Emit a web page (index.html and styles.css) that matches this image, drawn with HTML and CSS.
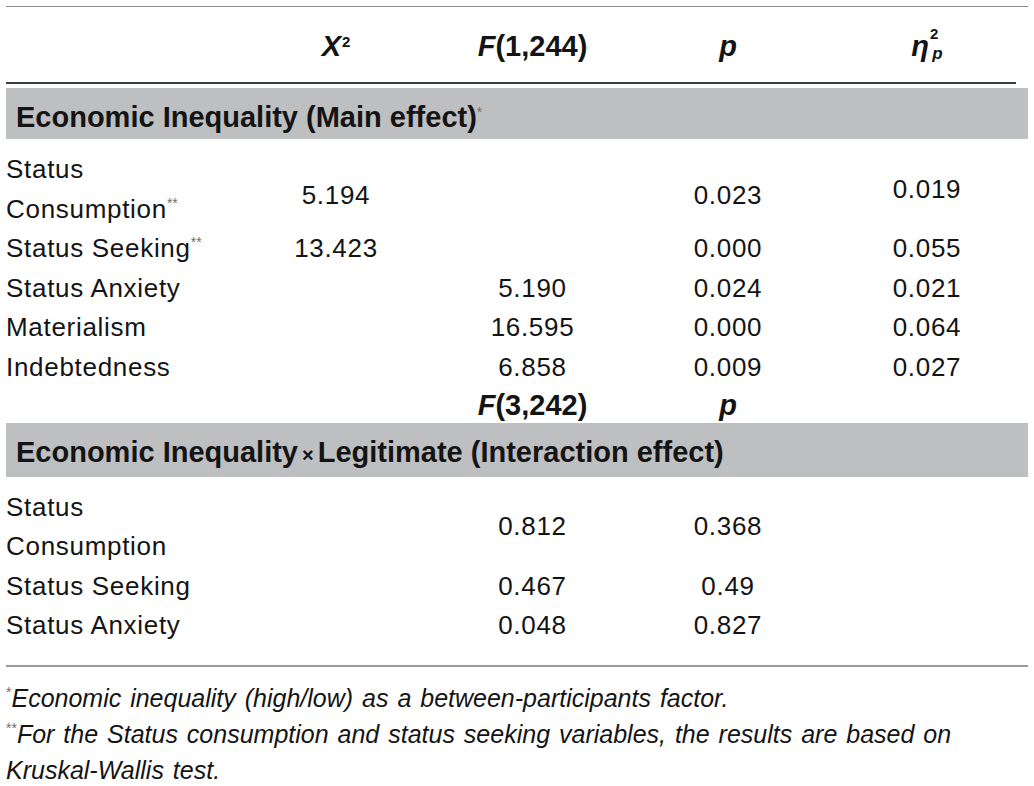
FILE: index.html
```html
<!DOCTYPE html>
<html lang="en">
<head>
  <meta charset="UTF-8" />
  <title>Economic inequality results</title>
  <link rel="stylesheet" href="styles.css">
</head>
<body>
  <div class="tbl">
    <div class="row head">
      <div></div>
      <div><i>X</i><sup class="sq">2</sup></div>
      <div><i>F</i>(1,244)</div>
      <div><i>p</i></div>
      <div><i>η</i><sup class="eta-sq">2</sup><sub class="eta-p">p</sub></div>
    </div>

    <div class="band">Economic Inequality (Main effect)<sup class="ast">*</sup></div>

    <div class="group">
      <div class="row">
        <div class="label">Status<br>Consumption<sup class="ast">**</sup></div>
        <div class="off">5.194</div>
        <div></div>
        <div class="off">0.023</div>
        <div>0.019</div>
      </div>
      <div class="row">
        <div class="label">Status Seeking<sup class="ast">**</sup></div>
        <div>13.423</div>
        <div></div>
        <div>0.000</div>
        <div>0.055</div>
      </div>
      <div class="row">
        <div class="label">Status Anxiety</div>
        <div></div>
        <div>5.190</div>
        <div>0.024</div>
        <div>0.021</div>
      </div>
      <div class="row">
        <div class="label">Materialism</div>
        <div></div>
        <div>16.595</div>
        <div>0.000</div>
        <div>0.064</div>
      </div>
      <div class="row">
        <div class="label">Indebtedness</div>
        <div></div>
        <div>6.858</div>
        <div>0.009</div>
        <div>0.027</div>
      </div>
    </div>

    <div class="row sub">
      <div></div>
      <div></div>
      <div><i>F</i>(3,242)</div>
      <div><i>p</i></div>
      <div></div>
    </div>

    <div class="band">Economic Inequality<span class="times">×</span>Legitimate (Interaction effect)</div>

    <div class="group">
      <div class="row">
        <div class="label">Status<br>Consumption</div>
        <div></div>
        <div>0.812</div>
        <div>0.368</div>
        <div></div>
      </div>
      <div class="row">
        <div class="label">Status Seeking</div>
        <div></div>
        <div>0.467</div>
        <div>0.49</div>
        <div></div>
      </div>
      <div class="row">
        <div class="label">Status Anxiety</div>
        <div></div>
        <div>0.048</div>
        <div>0.827</div>
        <div></div>
      </div>
    </div>
  </div>

  <div class="notes">
    <p><sup class="ast">*</sup>Economic inequality (high/low) as a between-participants factor.</p>
    <p><sup class="ast">**</sup>For the Status consumption and status seeking variables, the results are based on<br>Kruskal-Wallis test.</p>
  </div>
</body>
</html>
```

FILE: styles.css
```css
:root {
  --text-dark: #141414;
  --band-gray: #bebfc1;
  --rule-gray: #8c8c8c;
  --rule-dark: #3c3c3c;
  --note-gray: #6e6e6e;
}

body {
  margin: 0;
  padding-top: 6px;
  font-family: 'Liberation Sans', Arial, sans-serif;
  color: var(--text-dark);
  background: #fff;
}

.tbl {
  margin: 0 6px;
  border-top: 1px solid var(--rule-gray);
}

.row {
  display: grid;
  grid-template-columns: 231px 198px 195px 196px 1fr;
  align-items: center;
  font-size: 26px;
  letter-spacing: 0.7px;
  line-height: 39.6px;
}

.row > div {
  text-align: center;
}

.row > .label {
  text-align: left;
  white-space: nowrap;
}

.off {
  padding-top: 12px;
}

.head {
  font-weight: bold;
  font-size: 29px;
  letter-spacing: 0;
  line-height: 40px;
  padding: 19px 0 18px;
  margin-bottom: 4px;
  background: linear-gradient(var(--rule-dark), var(--rule-dark)) left bottom / calc(100% - 12px) 2px no-repeat;
}

.sub {
  font-weight: bold;
  font-size: 29px;
  letter-spacing: 0;
  line-height: 35px;
}

.sq {
  font-size: 15px;
  line-height: 0;
  vertical-align: 9px;
  margin-left: 1px;
}

.eta-sq {
  font-size: 15px;
  line-height: 0;
  vertical-align: 17px;
  margin-left: 1px;
}

.eta-p {
  font-size: 17px;
  font-style: italic;
  line-height: 0;
  vertical-align: -3px;
  margin-left: -6px;
}

.band {
  background: var(--band-gray);
  font-weight: bold;
  font-size: 29px;
  line-height: 44px;
  padding: 7px 10px 0;
  white-space: nowrap;
}

.times {
  font-size: 20px;
  margin: 0 4px;
}

.group {
  margin-top: 11px;
}

.ast {
  font-size: 14px;
  font-weight: normal;
  font-style: normal;
  color: var(--note-gray);
  line-height: 0;
  vertical-align: 10px;
  letter-spacing: 0;
  word-spacing: 0;
}

.notes {
  margin: 19px 6px 0;
  border-top: 2px solid #9a9a9a;
  padding-top: 13px;
  font-style: italic;
  font-size: 25px;
  line-height: 36px;
  word-spacing: 2px;
}

.notes p {
  margin: 0;
}
```
